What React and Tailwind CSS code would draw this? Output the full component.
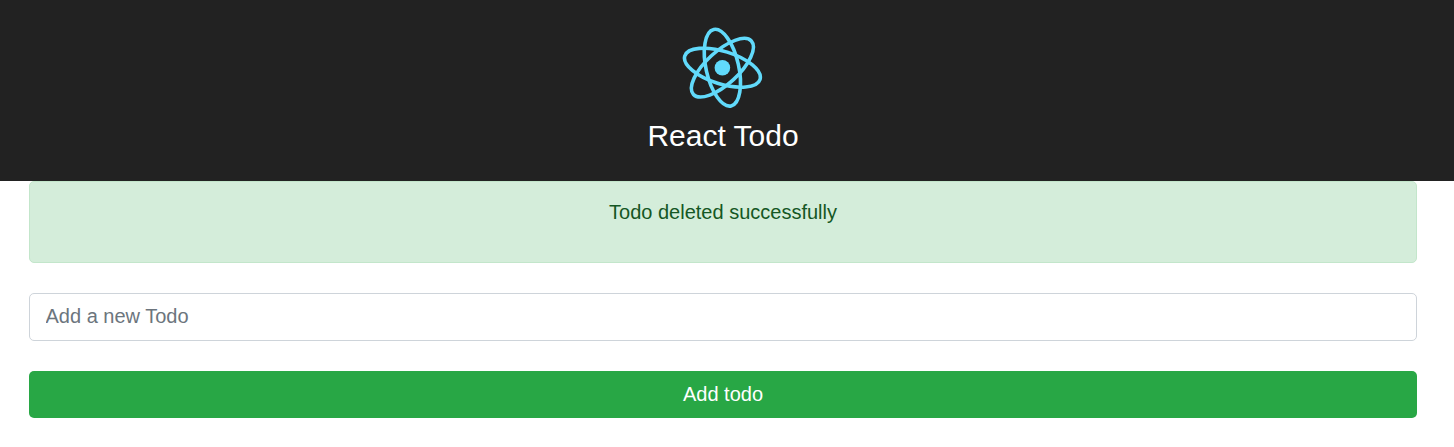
import React from "react";

function Logo() {
  return (
    <svg width="88" height="88" viewBox="-43.4 -43.7 88 88" aria-hidden="true">
      <circle r="7.8" fill="#61dafb" />
      <g fill="none" stroke="#61dafb" strokeWidth="3.6">
        <ellipse rx="39.4" ry="16.3" transform="rotate(17.3)" />
        <ellipse rx="39.2" ry="16.3" transform="rotate(77.2)" />
        <ellipse rx="39.4" ry="16.3" transform="rotate(137.3)" />
      </g>
    </svg>
  );
}

export default function App() {
  return (
    <div className="min-h-[447px] bg-white text-[20px] leading-[30px] font-['Liberation_Sans',Arial,sans-serif]">
      <header className="flex h-[181px] flex-col items-center bg-[#222] pt-6 pr-2 text-white">
        <Logo />
        <h1 className="mt-[6px] text-[30px] leading-9">React Todo</h1>
      </header>
      <main className="flex flex-col gap-[30px] pr-[37px] pl-[29px]">
        <div
          role="alert"
          className="h-[82px] rounded-[5px] border border-[#c3e6cb] bg-[#d4edda] pt-[15px] text-center text-[#155724]"
        >
          Todo deleted successfully
        </div>
        <input
          type="text"
          placeholder="Add a new Todo"
          className="h-12 w-full rounded-[5px] border border-[#ced4da] bg-white px-[15.5px] pb-[2px] text-[#495057] placeholder:text-[#6c757d]"
        />
        <button
          type="button"
          className="h-[47px] w-full rounded-[5px] bg-[#28a745] pb-[2px] text-white"
        >
          Add todo
        </button>
      </main>
    </div>
  );
}
